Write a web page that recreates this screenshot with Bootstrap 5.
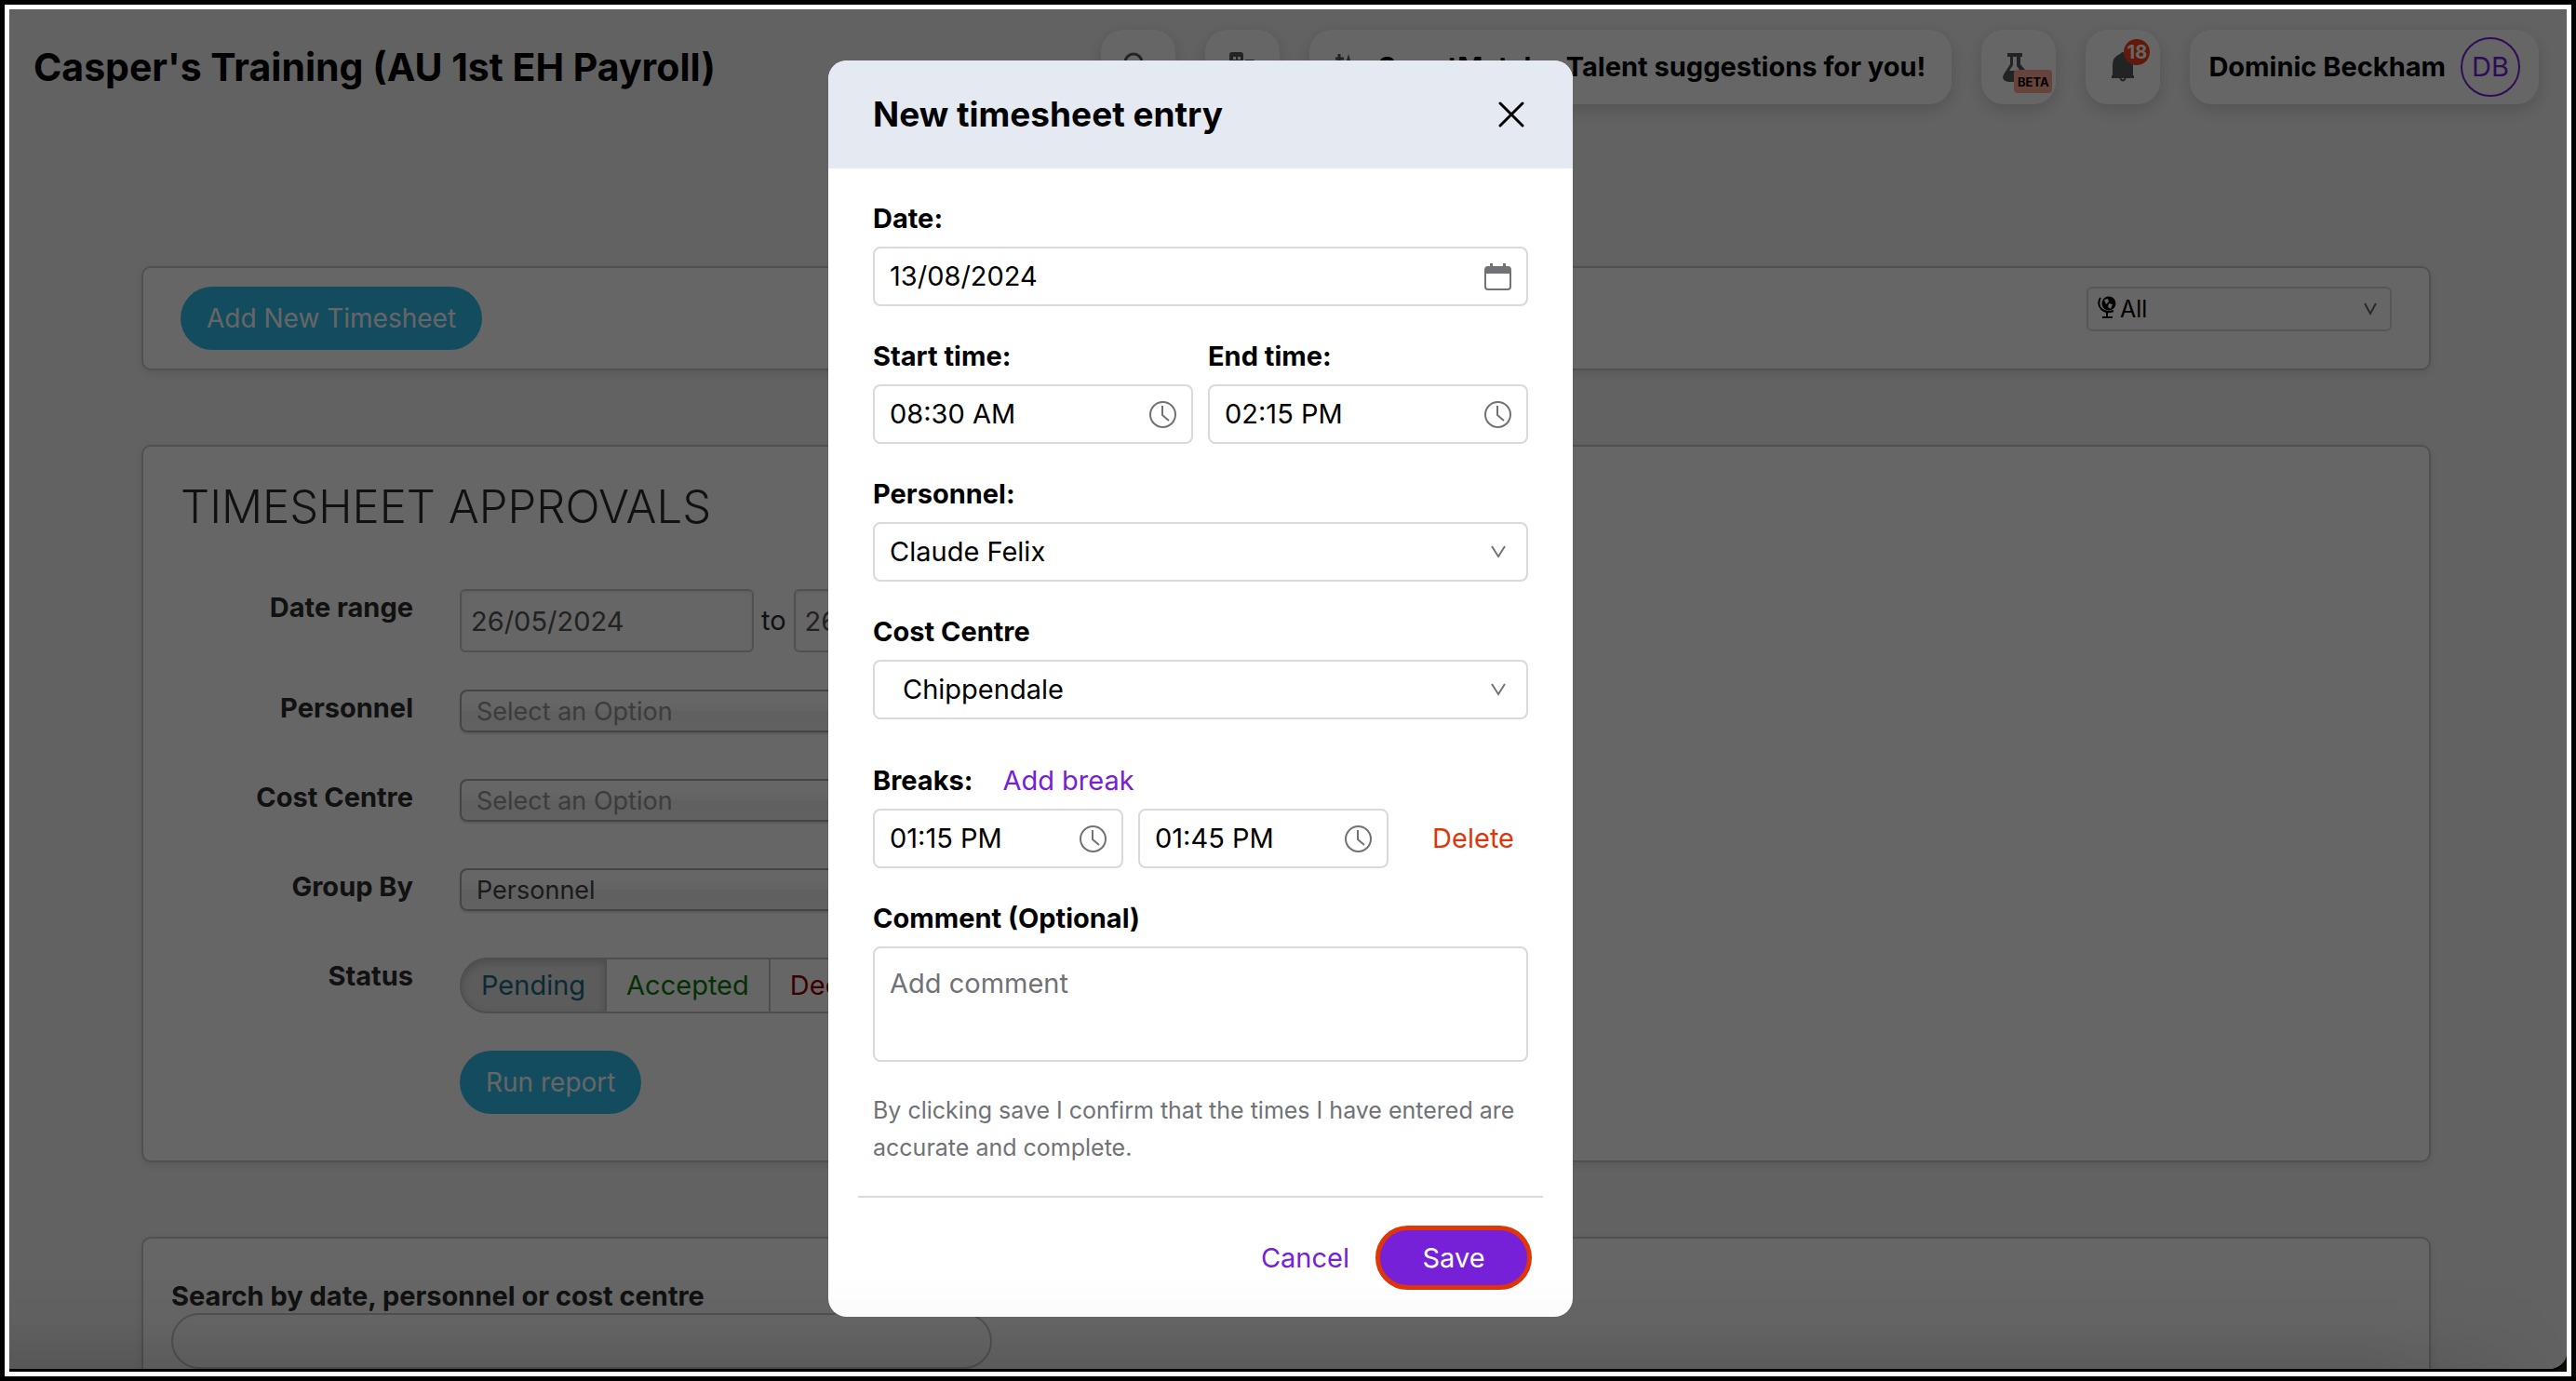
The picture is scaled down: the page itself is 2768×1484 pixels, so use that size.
<!DOCTYPE html>
<html lang="en">
<head>
<meta charset="utf-8">
<meta name="viewport" content="width=device-width, initial-scale=1">
<title>Timesheet approvals</title>
<link href="https://cdn.jsdelivr.net/npm/bootstrap@5.3.0/dist/css/bootstrap.min.css" rel="stylesheet">
<style>
body{font-family:Inter,"Open Sans",sans-serif;font-size:29px;line-height:36px;color:#000;background:#000;height:100vh;padding:5px;overflow:hidden}
.frame{border:5px solid #fff;background:#0d0b02}
.app{background:#f6f6f6;border-radius:0 0 20px 0;border-bottom:3px solid #000}
.topbar{padding:22px 30px 0 26px;gap:32px}
.topbar h1{font-size:41px;line-height:48px;font-weight:700;margin:0}
.tile{height:80px;min-width:80px;border:0;border-radius:24px;background:#fff;box-shadow:0 6px 20px rgba(0,0,0,.16);font-weight:700;color:#000}
.tile-wide{padding:0 28px}
.tile-user{padding:0 20px}
.avatar{width:64px;height:64px;border:2px solid #7321d9;border-radius:50%;color:#7321d9;font-weight:400}
.count{position:absolute;top:10px;right:11px;width:28px;height:28px;border-radius:50%;background:#f5401d;color:#fff;font-size:20px;line-height:28px}
.beta{position:absolute;left:35px;bottom:12px;width:41px;height:25px;border-radius:4px;background:#ffaa96;font-size:13px;line-height:27px}
.content{padding:174px 146px 0 142px;gap:80px}
.panel{border:2px solid #c8c8c8;border-radius:10px;background:#fff;box-shadow:0 3px 12px rgba(0,0,0,.1);color:#2b2b2b}
.actions{padding:20px 40px}
.pill{border:0;border-radius:34px;height:68px;padding:0 28px;background:#2fbeeb;color:#fff;font-size:28px}
.loc{width:328px;height:48px;border:2px solid #d9d9d9;border-radius:6px;padding:0 14px 0 10px;color:#000}
.panel h2{font-size:49px;line-height:58px;font-weight:300;margin:0}
.filters{padding:36px 40px 50px}
.flabel{width:250px;text-align:right;font-weight:700}
.frow{gap:50px;margin-bottom:50px}
.frow .flabel{padding-top:2px}
.rowdate{margin:59px 0 40px}
.rowstat{margin-bottom:40px}
.rowrun{margin-bottom:0}
.datebox{width:316px;height:68px;border:2px solid #c8c8c8;border-radius:6px;padding:0 10px;color:#555;background:#fff;box-shadow:inset 0 2px 3px rgba(0,0,0,.08)}
.chosen{width:616px;height:46px;border:2px solid #aaa;border-radius:8px;padding:2px 16px 0;font-size:27px;line-height:36px;color:#444;background:linear-gradient(#fff 30%,#f6f6f6 50%,#eee 52%,#f4f4f4);box-shadow:0 2px 2px rgba(0,0,0,.1);appearance:none}
.chosen.empty{color:#969696}
.seg button{height:60px;border:2px solid #c4c4c4;border-left-width:0;background:#fff;padding:0 21px}
.seg button:first-child{border-left-width:2px;border-radius:30px 0 0 30px;background:#e6e6e6;box-shadow:inset 0 3px 8px rgba(0,0,0,.18);color:#1b6a85}
.seg button:last-child{border-radius:0 30px 30px 0}
.seg .ok{color:#0a780a}
.seg .no{color:#8c0000}
.search-panel{padding:44px 30px 0;height:300px}
.searchbox{width:882px;height:60px;border:2px solid #c8c8c8;border-radius:30px;background:#fff}
.shade{position:absolute;inset:0;background:rgba(0,0,0,.6)}
.entry{position:absolute;padding-right:188px}
.entry .modal-dialog{max-width:800px;margin:55px auto 0}
.entry .modal-content{border:0;border-radius:20px;overflow:hidden;color:#000}
.entry .modal-header{height:116px;border:0;border-radius:0;background:#e5eaf2;padding:0 48px}
.entry .modal-title{font-size:37px;line-height:48px;font-weight:700}
.entry .modal-body{padding:36px 48px 32px}
.entry .modal-footer{margin:0 32px;padding:30px 12px 29px;border-top:2px solid #d9d9de;gap:28px}
.lab{display:block;font-weight:700;margin-bottom:12px}
.group{margin-bottom:36px}
.field{height:64px;border:2px solid #d9d9de;border-radius:8px;padding:0 16px;background:#fff;min-width:0}
.field input{border:0;outline:0;padding:0;min-width:0;width:100%;color:#000;background:none}
select.field,.loc select{appearance:none;color:#000}
select.field{width:100%;background:#fff url("data:image/svg+xml,%3Csvg xmlns='http://www.w3.org/2000/svg' viewBox='0 0 16 14'%3E%3Cpath d='M1 1l7 11 7-11' fill='none' stroke='%23707276' stroke-width='2'/%3E%3C/svg%3E") no-repeat right 22px center/16px 14px}
.loc select{border:0;background:none;padding:0;font-size:25px}
select.indent{padding-left:30px}
.breakfield{width:269px}
.addbreak{margin:0 0 12px 32px}
.note{height:124px;width:100%;display:block;border:2px solid #d9d9de;border-radius:8px;padding:20px 16px;resize:none}
.note::placeholder{color:#707276}
.terms{font-size:25px;line-height:40px;color:#707276;margin:32px 0 0}
.plain{border:0;background:none;padding:0;color:#7621d7}
.remove{color:#df3609;margin:0 15px 0 auto}
.save{height:69px;width:168px;border:5px solid #df3609;border-radius:35px;background:#7621d7;color:#fff}
.dusk{position:absolute;left:0;right:0;bottom:0;z-index:1060;height:100px;background:linear-gradient(rgba(0,0,0,0),rgba(0,0,0,.02) 50%,rgba(0,0,0,.11));-webkit-mask-image:linear-gradient(90deg,#000 92%,transparent);mask-image:linear-gradient(90deg,#000 92%,transparent);pointer-events:none}
</style>
<script src="https://cdn.jsdelivr.net/npm/bootstrap@5.3.0/dist/js/bootstrap.bundle.min.js"></script>
</head>
<body>
<div class="frame h-100">
<div class="app position-relative h-100 overflow-hidden">
  <header class="topbar d-flex align-items-center">
    <h1 class="me-auto">Casper's Training (AU 1st EH Payroll)</h1>
    <button class="tile" aria-label="Search"><svg class="d-block mx-auto" width="32" height="32" viewBox="0 0 32 32" fill="none" stroke="#555a5e" stroke-width="3"><circle cx="11" cy="11" r="9"/><path d="M18 18l11 11"/></svg></button>
    <button class="tile" aria-label="Organisation"><svg class="d-block mx-auto" width="28" height="32" viewBox="0 0 28 32" fill="#555a5e"><path fill-rule="evenodd" d="M3 0h9a3 3 0 0 1 3 3v29H0V3a3 3 0 0 1 3-3zM4 5v3h3V5zm5 0v3h3V5zM4 12v3h3v-3zm5 0v3h3v-3z"/><path d="M17 8h8a3 3 0 0 1 3 3v21H17z"/></svg></button>
    <button class="tile tile-wide d-flex align-items-center"><svg class="me-4" width="22" height="32" viewBox="0 0 22 32"><path d="M4 2v10M0 7h9" stroke="#555a5e" stroke-width="3"/><path d="M14 2l3 10 5 4-5 3-3 11-3-11-7-3 7-4z" fill="#555a5e"/></svg>SmartMatch - Talent suggestions for you!</button>
    <button class="tile position-relative" aria-label="Beta features"><svg class="d-block mx-auto" width="34" height="33" viewBox="0 0 34 33"><path d="M5 1h16v4h-2v8l9 11q3 8-4 8H6q-8-1-5-8L8 13V5H5z" fill="#55595e"/><path d="M11 5h4v10l4 5H7l4-6z" fill="#fff"/></svg><span class="beta">BETA</span></button>
    <button class="tile position-relative" aria-label="Notifications"><svg class="d-block mx-auto" width="24" height="32" viewBox="0 0 24 32" fill="#55595e"><path d="M9 2q3-4 6 0 8 3 8 12v11h1v3H0v-3h1V14Q1 5 9 2z"/><path d="M9 28q3 5 6 0" fill="none" stroke="#55595e" stroke-width="2"/></svg><span class="count">18</span></button>
    <button class="tile tile-user d-flex align-items-center gap-3">Dominic Beckham<span class="avatar d-flex align-items-center justify-content-center">DB</span></button>
  </header>

  <main class="content d-flex flex-column">
    <section class="panel actions d-flex justify-content-between align-items-start">
      <button class="pill">Add New Timesheet</button>
      <div class="loc d-flex align-items-center gap-1">
        <svg class="mb-1" width="20" height="24" viewBox="0 0 20 24"><circle cx="12" cy="8" r="7.500"/><path d="M7 4l4-1 1 3-3 3zM12 8l4 1-2 5-3-2z" fill="#fff"/><path d="M3 2Q-1 9 4 14t13 2M10 17v5M5 23h11" fill="none" stroke="#000" stroke-width="2"/></svg>
        <select class="flex-grow-1" aria-label="Location"><option>All</option></select>
        <svg width="14" height="15" viewBox="0 0 14 15"><path d="M1 1l6 11 6-11" fill="none" stroke="#666" stroke-width="2"/></svg>
      </div>
    </section>

    <section class="panel filters">
      <h2>TIMESHEET APPROVALS</h2>
      <div class="frow rowdate d-flex"><label class="flabel" for="from">Date range</label>
        <div class="d-flex align-items-center gap-2"><input class="datebox" id="from" value="26/05/2024"><span>to</span><input class="datebox" aria-label="Range end" value="26/08/2024"></div></div>
      <div class="frow d-flex"><label class="flabel" for="fp">Personnel</label><select id="fp" class="chosen empty"><option>Select an Option</option></select></div>
      <div class="frow d-flex"><label class="flabel" for="fc">Cost Centre</label><select id="fc" class="chosen empty"><option>Select an Option</option></select></div>
      <div class="frow d-flex"><label class="flabel" for="fg">Group By</label><select id="fg" class="chosen"><option>Personnel</option></select></div>
      <div class="frow rowstat d-flex"><span class="flabel">Status</span>
        <div class="seg d-flex"><button>Pending</button><button class="ok">Accepted</button><button class="no">Declined</button></div></div>
      <div class="frow rowrun d-flex"><span class="flabel"></span><button class="pill">Run report</button></div>
    </section>

    <section class="panel search-panel">
      <label class="fw-bold d-block" for="q">Search by date, personnel or cost centre</label>
      <input class="searchbox d-block" id="q">
    </section>
  </main>

  <div class="shade"></div>

  <div class="modal show d-block entry" tabindex="-1" role="dialog" aria-labelledby="mt">
    <div class="modal-dialog"><form class="modal-content">
      <div class="modal-header d-flex justify-content-between align-items-center">
        <h2 class="modal-title" id="mt">New timesheet entry</h2>
        <button type="button" class="plain d-flex me-1" aria-label="Close"><svg width="28" height="28" viewBox="0 0 28 28"><path d="M2 2l24 24M26 2L2 26" stroke="#000" stroke-width="3" stroke-linecap="round"/></svg></button>
      </div>
      <div class="modal-body">
        <div class="group"><label class="lab" for="d">Date:</label>
          <div class="field d-flex align-items-center"><input id="d" value="13/08/2024"><svg class="flex-shrink-0" width="29" height="29" viewBox="0 0 29 29"><rect x="1" y="4" width="27" height="24" rx="3" fill="none" stroke="#707276" stroke-width="2"/><path d="M1 5q1-2 3-2h21q3 0 3 3v5H1zM6 0h3v4H6zM20 0h3v4h-3z" fill="#707276"/></svg></div></div>
        <div class="group d-flex gap-3">
          <div class="flex-fill"><label class="lab" for="s">Start time:</label><div class="field d-flex align-items-center"><input id="s" size="5" value="08:30 AM"><svg class="flex-shrink-0" width="29" height="29" viewBox="0 0 29 29"><g fill="none" stroke="#707276" stroke-width="2"><circle cx="14.500" cy="14.500" r="13.500"/><path d="M14 5v10l7 6"/></g></svg></div></div>
          <div class="flex-fill"><label class="lab" for="e">End time:</label><div class="field d-flex align-items-center"><input id="e" size="5" value="02:15 PM"><svg class="flex-shrink-0" width="29" height="29" viewBox="0 0 29 29"><g fill="none" stroke="#707276" stroke-width="2"><circle cx="14.500" cy="14.500" r="13.500"/><path d="M14 5v10l7 6"/></g></svg></div></div>
        </div>
        <div class="group"><label class="lab" for="p">Personnel:</label><select class="field" id="p"><option>Claude Felix</option></select></div>
        <div class="group mb-5"><label class="lab" for="c">Cost Centre</label><select class="field indent" id="c"><option>Chippendale</option></select></div>
        <div class="group">
          <div class="d-flex"><span class="lab">Breaks:</span><button type="button" class="plain addbreak">Add break</button></div>
          <div class="d-flex gap-3">
            <div class="field breakfield d-flex align-items-center"><input aria-label="Break start" value="01:15 PM"><svg class="flex-shrink-0" width="29" height="29" viewBox="0 0 29 29"><g fill="none" stroke="#707276" stroke-width="2"><circle cx="14.500" cy="14.500" r="13.500"/><path d="M14 5v10l7 6"/></g></svg></div>
            <div class="field breakfield d-flex align-items-center"><input aria-label="Break end" value="01:45 PM"><svg class="flex-shrink-0" width="29" height="29" viewBox="0 0 29 29"><g fill="none" stroke="#707276" stroke-width="2"><circle cx="14.500" cy="14.500" r="13.500"/><path d="M14 5v10l7 6"/></g></svg></div>
            <button type="button" class="plain remove">Delete</button>
          </div></div>
        <label class="lab" for="n">Comment (Optional)</label><textarea class="note" id="n" placeholder="Add comment"></textarea>
        <p class="terms">By clicking save I confirm that the times I have entered are accurate and complete.</p>
      </div>
      <div class="modal-footer"><button type="button" class="plain m-0">Cancel</button><button type="button" class="save m-0">Save</button></div>
    </form></div>
  </div>
  <div class="dusk"></div>
</div>
</div>
</body>
</html>
